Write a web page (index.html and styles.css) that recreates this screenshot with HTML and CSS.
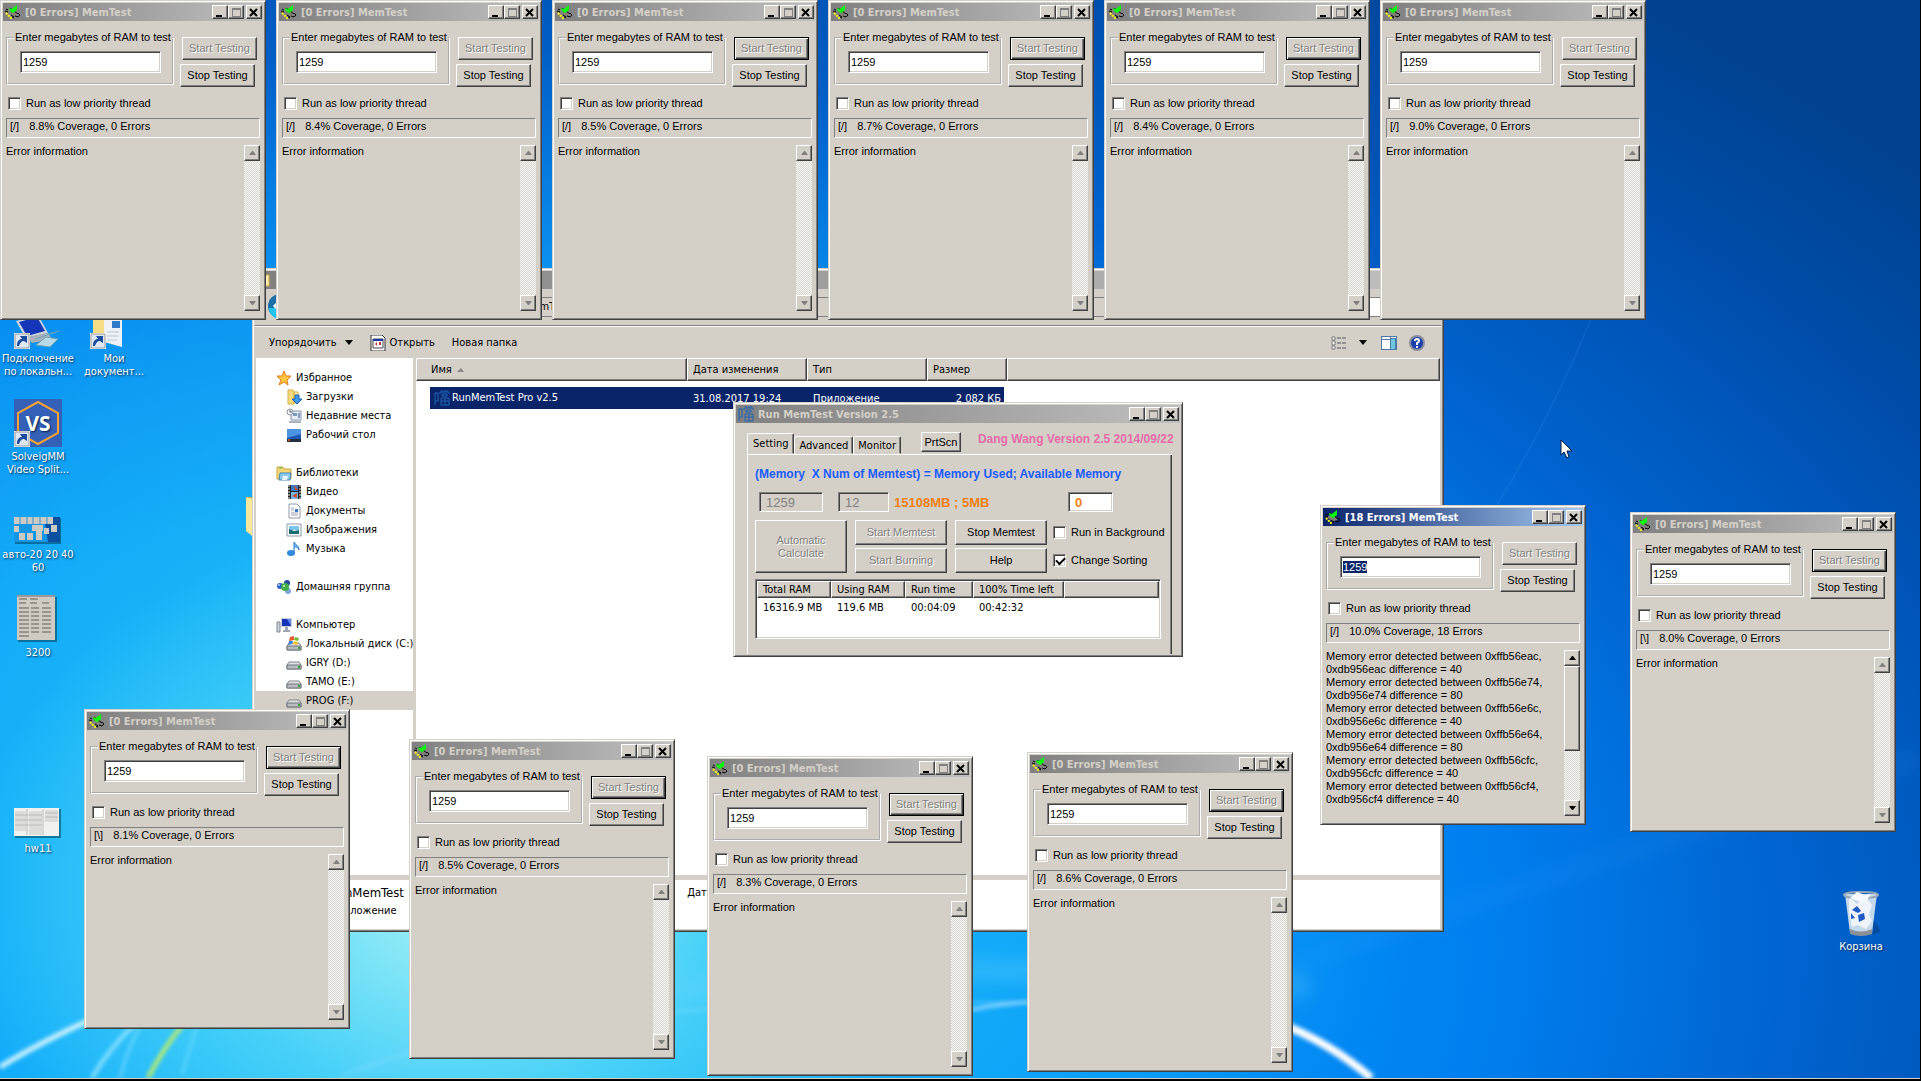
FILE: index.html
```html
<!DOCTYPE html>
<html lang="ru">
<head>
<meta charset="utf-8">
<meta name="viewport" content="width=device-width,initial-scale=1">
<title>MemTest</title>
<link rel="stylesheet" href="styles.css">
</head>
<body>
<svg class="defs" width="0" height="0" aria-hidden="true">
    <defs>
        <symbol id="i-mem" viewBox="0 0 16 16">
            <path d="M2 8l6 5 5-3-6-5z" fill="#808078"/>
            <path d="M1 5l2 1M0 7l3 1M5 4l8 6M13 9l2 2-2 2-3-1M9 14l-2-1M6 11l3 2" stroke="#000" fill="none"/>
            <path d="M1 9l6 6" stroke="#ff0" stroke-width="2" stroke-dasharray="2 1"/>
            <path d="M4 4l3 1 5-4v5L8 9 5 7z" fill="#0f0"/>
        </symbol>
        <symbol id="i-run" viewBox="0 0 16 16">
            <path d="M1 3h3v8H1zM6 2h9M8 0v2M11 0v2M13 0v2M6 2v2M15 2v2M8 4h5v2H8zM7 8h8v7H7zM7 11h8M11 8v7M1 11v4" fill="none" stroke="#1f62b4"/>
        </symbol>
        <symbol id="i-star" viewBox="0 0 16 16"><path d="M8 1l2 5 5 0-4 4 1 5-4-3-5 3 2-5-4-4h5z" fill="#ffc640" stroke="#e87b18"/></symbol>
        <symbol id="i-folder" viewBox="0 0 16 16"><path d="M2 1h5l1 2v12H2z" fill="#f7dc7c" stroke="#d9ae40"/><path d="M8 3h4v11H8z" fill="#ffeeb0" stroke="#d9ae40"/></symbol>
        <symbol id="i-down" viewBox="0 0 16 16"><use href="#i-folder"/><path d="M9 6h4v4h3l-5 5-5-5h3z" fill="#3f9be8" stroke="#1763b5"/></symbol>
        <symbol id="i-recent" viewBox="0 0 16 16"><path d="M5 3h10v9H5z" fill="#e6edf5" stroke="#8a97a6"/><path d="M7 5h4v3H7zM12 5h2v5h-2z" fill="#7b9cc0"/><path d="M3 13h12v2H3z" fill="#a9b2bd"/><circle cx="4" cy="4" r="3" fill="#f3f6f9" stroke="#8a97a6"/><path d="M4 2v2h2" fill="none" stroke="#555"/></symbol>
        <symbol id="i-desk" viewBox="0 0 16 16"><path d="M1 2h14v12H1z" fill="#1e57b6"/><path d="M1 2h14v5L1 11z" fill="#4c94e2"/><path d="M1 12h14v3H1z" fill="#20303f"/><circle cx="3" cy="13" r="1" fill="#f60"/></symbol>
        <symbol id="i-lib" viewBox="0 0 16 16"><path d="M1 2h6l1 2h7v10H1z" fill="#f2d878" stroke="#cda93f"/><path d="M3 3h3" stroke="#4fae4a"/><path d="M4 8h11l-1 7H3z" fill="#8cc9ea" stroke="#3f87b5"/><path d="M6 15l1-4h5l-1 4z" fill="#e9f5fb"/></symbol>
        <symbol id="i-video" viewBox="0 0 16 16"><path d="M2 1h13v14H2z" fill="#222"/><path d="M5 1h7v6H5z" fill="#3d7cc4"/><path d="M5 8h7v7H5z" fill="#76b5ea"/><path d="M8 1l4 5H9zM6 12l5-3v5z" fill="#c4502b"/><path d="M3 1v14M14 1v14" stroke="#eee" stroke-dasharray="2 1"/></symbol>
        <symbol id="i-doc" viewBox="0 0 16 16"><path d="M3 1h8l3 3v11H3z" fill="#fff" stroke="#8c9aa8"/><path d="M5 5h3M5 7h3M5 10h7M5 12h7" stroke="#99a5b1"/><path d="M9 6h3v3H9z" fill="#2f79c7"/></symbol>
        <symbol id="i-pic" viewBox="0 0 16 16"><path d="M1 2h14v12H1z" fill="#fff" stroke="#8c9aa8"/><path d="M3 4h10v4H3z" fill="#7cc4ef"/><path d="M3 7l5 2 5-1v4H3z" fill="#1d6c74"/></symbol>
        <symbol id="i-music" viewBox="0 0 16 16"><ellipse cx="5" cy="12" rx="4" ry="3" fill="#2d8be0"/><path d="M8 12V1c1 3 5 3 5 8-1-3-3-3-4-3" fill="#79bff5" stroke="#2d7dcb"/></symbol>
        <symbol id="i-home" viewBox="0 0 16 16"><circle cx="4" cy="7" r="3" fill="#2f5fd0"/><circle cx="11" cy="4" r="3" fill="#28489c"/><circle cx="12" cy="12" r="3" fill="#7fa5dd"/><circle cx="9" cy="8" r="4" fill="#43b04a"/><circle cx="8" cy="7" r="1" fill="#d8f5cf"/><circle cx="3" cy="6" r="1" fill="#b9cdfa"/></symbol>
        <symbol id="i-pc" viewBox="0 0 16 16"><path d="M1 5h3v10H1z" fill="#cfd5db" stroke="#7d8791"/><path d="M5 1h11v9H5z" fill="#c8d0d8"/><path d="M6 2h9v7H6z" fill="#1734b8"/><path d="M11 2h4v7z" fill="#5f8bee"/><path d="M9 10h3v3h2v2H7v-2h2z" fill="#9ca6b0"/></symbol>
        <symbol id="i-disk" viewBox="0 0 16 16"><path d="M3 7h10l2 3v4H1v-4z" fill="#dfe2e5" stroke="#80868c"/><path d="M1 10h14v4H1z" fill="#b7bcc1" stroke="#6f757b"/><path d="M12 11h2v2h-2z" fill="#2fa62f"/></symbol>
        <symbol id="i-sys" viewBox="0 0 16 16"><use href="#i-disk"/><path d="M4 1l4-1v4L3 5z" fill="#e8592b"/><path d="M9 1l4 1-1 3-4-1z" fill="#6fbb3a"/><path d="M3 5l4 0-1 3-4 1z" fill="#3f86de"/><path d="M8 5l4 1-1 3-4-1z" fill="#f6c22c"/></symbol>
        <symbol id="i-exe" viewBox="0 0 16 16"><path d="M1 0h11l3 3v13H1z" fill="#fff" stroke="#333"/><path d="M3 4h10v9H3z" fill="#fff" stroke="#444"/><path d="M3 4h10v2H3z" fill="#1c3aa5"/><path d="M5 9l2-2v4zM9 7h2v3H9z" fill="#c33"/></symbol>
        <symbol id="i-short" viewBox="0 0 16 16"><path d="M0 0h16v16H0z" fill="#fff"/><path d="M1 1h14v14H1z" fill="#dfe9f5" stroke="#999"/><path d="M3 13c0-5 2-7 5-7L6 3h7v7l-3-2c-3 0-4 2-5 5z" fill="#1c4d9c"/></symbol>
    </defs>
</svg>

<main class="desktop">
    <svg class="wallpaper" viewBox="0 0 1921 1081" preserveAspectRatio="none" aria-hidden="true">
        <defs>
            <filter id="soft"><feGaussianBlur stdDeviation="2"/></filter>
            <filter id="softer"><feGaussianBlur stdDeviation="9"/></filter>
        </defs>
        <path d="M1290 740Q1480 600 1600 300" fill="none" stroke="#3f9bf0" stroke-opacity=".15" stroke-width="2"/>
        <g filter="url(#softer)" fill="none">
            <path d="M350 1080Q700 930 1310 990" stroke="#6fd3ff" stroke-opacity=".35" stroke-width="18"/>
            <path d="M1290 970Q1420 920 1921 760" stroke="#45a8ff" stroke-opacity=".12" stroke-width="16"/>
        </g>
        <g filter="url(#soft)" fill="none">
            <path d="M0 1070Q40 1045 96 1020" stroke="#d8f6ff" stroke-width="5"/>
            <path d="M92 1081Q110 1050 136 1026" stroke="#90e4ff" stroke-width="4"/>
            <path d="M120 1081Q128 1050 142 1026" stroke="#7cdcff" stroke-width="2"/>
            <path d="M148 1081Q164 1050 184 1026" stroke="#c8f060" stroke-width="4"/>
            <path d="M182 1078Q190 1050 198 1026" stroke="#6ddcff" stroke-width="2"/>
            <path d="M340 1080Q520 1000 1030 1005" stroke="#8fe0ff" stroke-opacity=".5" stroke-width="2"/>
            <path d="M960 1015Q1000 1006 1040 1004" stroke="#9ddcff" stroke-width="3"/>
            <path d="M1280 1026Q1330 1045 1372 1081" stroke="#fff" stroke-width="8"/>
        </g>
    </svg>

    <nav class="shortcuts">
        <a href="#" class="shortcut lan">
            <svg width="48" height="48" viewBox="0 0 48 48"><path d="M2 20l22-6 10 18-22 6z" fill="#ccd4dc"/><path d="M5 21l18-5 8 14-18 5z" fill="#1636b8"/><path d="M12 36l22-4 4 6-20 4z" fill="#a8b1ba"/><path d="M22 38l16-6 8-2M22 44l14 2 8-8-12-2z" fill="#b9dbe8" stroke="#6da0b5"/><use href="#i-short" y="32" width="16" height="16"/></svg>
            <span>Подключение по локальн...</span>
        </a>
        <a href="#" class="shortcut docs">
            <svg width="48" height="48" viewBox="0 0 48 48"><path d="M3 8l12-4v40L3 40z" fill="#f7dd85"/><path d="M14 4h18v42l-18-5z" fill="#eef2f6"/><path d="M22 20h8v7h-8z" fill="#2f79c7"/><path d="M17 31h12M17 35h12M17 39h10" stroke="#b8c3cf"/><use href="#i-short" y="32" width="16" height="16"/></svg>
            <span>Мои документ...</span>
        </a>
        <a href="#" class="shortcut">
            <svg width="48" height="48" viewBox="0 0 48 48"><path d="M0 0h48v48H0z" fill="#3560b8"/><path d="M24 3l20 11v20L24 45 4 34V14z" fill="none" stroke="#f7a234" stroke-width="2"/><text class="vs" x="24" y="32" text-anchor="middle">VS</text><use href="#i-short" y="32" width="16" height="16"/></svg>
            <span>SolveigMM Video Split...</span>
        </a>
        <a href="#" class="shortcut">
            <svg width="48" height="48" viewBox="0 0 48 48"><path d="M1 21h46v26H1z" fill="#034" opacity=".5"/><path d="M0 20h46v25H0z" fill="#1496e6"/><path d="M30 20h16v25H34z" fill="#0b4f9f"/><path d="M0 20h39v7H0zM0 29h5v6H0zM18 28h11v6H18zM30 31h5v6h-5zM37 28h6v7h-6zM5 36h6v7H5zM13 36h6v7h-6zM22 34h6v9h-6z" fill="#cbcac5"/><path d="M6 20v7M13 20v7M19 20v7M26 20v7M33 20v7" stroke="#3a8fd0"/></svg>
            <span>авто-20 20 40 60</span>
        </a>
        <a href="#" class="shortcut">
            <svg width="48" height="48" viewBox="0 0 48 48"><path d="M4 2h39v45H4z" fill="#034" opacity=".5"/><path d="M3 0h38v45H3z" fill="#cfcbc2"/><path d="M3 1h38" stroke="#667"/><path d="M5 4h8M16 4h8M5 8h7M16 8h7M28 8h7M5 13h10M5 17h10M5 21h10M5 25h10M5 29h10M5 33h10M5 37h10M5 41h10M17 13h8M17 17h8M17 21h8M17 25h8M17 29h8M17 33h8M17 37h8M28 13h9M28 17h9M28 21h9M28 25h9M28 29h9M28 33h9M28 37h9" stroke="#99958d" stroke-width="2"/></svg>
            <span>3200</span>
        </a>
        <a href="#" class="shortcut last">
            <svg width="48" height="48" viewBox="0 0 48 48"><path d="M1 18h46v29H1z" fill="#034" opacity=".5"/><path d="M0 17h45v28H0z" fill="#f1f1ef"/><path d="M1 20h11v20H1zM15 20h13v24H15zM31 19h13v12H31z" fill="#dcdcd8"/><path d="M1 24h27M1 29h27M1 34h27M31 22h13M31 26h13M13 18v26M29 18v26" stroke="#bbb"/></svg>
            <span>hw11</span>
        </a>
    </nav>

    <svg class="peek-folder" width="12" height="44" viewBox="0 0 12 44" aria-hidden="true"><path d="M0 0l12 2v42L0 34z" fill="#f9e79b"/><path d="M0 0l12 2" stroke="#d6b04e"/></svg>

    <a href="#" class="shortcut bin">
        <svg width="48" height="48" viewBox="0 0 48 48"><path d="M36 30l8 12-8 4z" fill="#013a80" opacity=".5"/><path d="M8 5h32l-5 39q-11 4-22 0z" fill="#c5d9ec"/><path d="M12 8l8 7 7-9 8 10-3 10 3 6-6 8-8-4-6 2-3-14z" fill="#eef4fa"/><path d="M13 40q11 5 22 0v5q-11 4-22 0z" fill="#8b9096"/><ellipse cx="24" cy="6" rx="17" ry="3" fill="none" stroke="#9aa8b5" stroke-width="2"/><path d="M13 9l7-6 8 3 6-1-4 6-9 1z" fill="#f8fbfe"/><path d="M15 21l5-4 4 5-3 2zM14 24l4 5-4 1zM21 26l6-2 1 6-6 3z" fill="#2159c7"/></svg>
        <span>Корзина</span>
    </a>

    <section class="window explorer">
        <header class="titlebar"><svg width="16" height="16"><use href="#i-folder"/></svg></header>
        <div class="addressbar">
            <svg width="54" height="28" viewBox="0 0 54 28"><circle cx="13" cy="13" r="12" fill="#1d6fa8"/><path d="M2 15a11 11 0 0 0 22 0z" fill="#21c5f2"/><path d="M14 7l-6 6 6 6M8 13h11" stroke="#fff" stroke-width="3" fill="none"/><circle cx="40" cy="14" r="11" fill="#a3a5a8"/></svg>
            <div class="path">RunMemTest</div>
            <input class="search" type="text" aria-label="Поиск">
        </div>
        <div class="toolbar">
            <button type="button">Упорядочить <svg width="8" height="5"><path d="M0 0h8L4 5z"/></svg></button>
            <button type="button"><svg width="16" height="16"><use href="#i-exe"/></svg>Открыть</button>
            <button type="button">Новая папка</button>
            <span class="spacer"></span>
            <button type="button" class="view" aria-label="Вид"><svg width="16" height="14" viewBox="0 0 16 14"><path d="M1 1h3v3H1zM1 5h3v4H1zM1 10h3v3H1z" fill="#fff" stroke="#777"/><path d="M6 2h10M6 7h10M6 12h10" stroke="#556" stroke-dasharray="4 1"/></svg><svg width="8" height="5"><path d="M0 0h8L4 5z"/></svg></button>
            <button type="button" class="preview" aria-label="Область просмотра"><svg width="16" height="14" viewBox="0 0 16 14"><path d="M0 0h16v14H0z" fill="#4b78a8"/><path d="M1 1h8v2H1zM1 4h8v9H1zM10 1h5v1h-5z" fill="#fff"/><path d="M10 3h4v10h-4z" fill="#6cc8df"/></svg></button>
            <button type="button" aria-label="Справка"><svg width="16" height="16" viewBox="0 0 16 16"><circle cx="8" cy="8" r="8" fill="#8a8f9c"/><circle cx="8" cy="8" r="6" fill="#1c3fae"/><path d="M6 6q0-2 2-2t2 2q0 1-2 2v2M8 11v2" stroke="#fff" stroke-width="2" fill="none"/></svg></button>
        </div>
        <div class="panes">
            <nav class="tree">
                <a href="#"><svg><use href="#i-star"/></svg>Избранное</a>
                <a href="#" class="sub"><svg><use href="#i-down"/></svg>Загрузки</a>
                <a href="#" class="sub"><svg><use href="#i-recent"/></svg>Недавние места</a>
                <a href="#" class="sub"><svg><use href="#i-desk"/></svg>Рабочий стол</a>
                <a href="#" class="group"><svg><use href="#i-lib"/></svg>Библиотеки</a>
                <a href="#" class="sub"><svg><use href="#i-video"/></svg>Видео</a>
                <a href="#" class="sub"><svg><use href="#i-doc"/></svg>Документы</a>
                <a href="#" class="sub"><svg><use href="#i-pic"/></svg>Изображения</a>
                <a href="#" class="sub"><svg><use href="#i-music"/></svg>Музыка</a>
                <a href="#" class="group"><svg><use href="#i-home"/></svg>Домашняя группа</a>
                <a href="#" class="group"><svg><use href="#i-pc"/></svg>Компьютер</a>
                <a href="#" class="sub"><svg><use href="#i-sys"/></svg>Локальный диск (C:)</a>
                <a href="#" class="sub"><svg><use href="#i-disk"/></svg>IGRY (D:)</a>
                <a href="#" class="sub"><svg><use href="#i-disk"/></svg>TAMO (E:)</a>
                <a href="#" class="sub current"><svg><use href="#i-disk"/></svg>PROG (F:)</a>
            </nav>
            <div class="list">
                <table class="files">
                    <thead>
                        <tr><th class="c-name">Имя <svg width="7" height="4"><path d="M0 4h7L4 0z" fill="#888"/></svg></th><th class="c-mid">Дата изменения</th><th class="c-mid">Тип</th><th class="c-size">Размер</th><th></th></tr>
                    </thead>
                    <tbody>
                        <tr><td><svg width="16" height="16"><use href="#i-run"/></svg>RunMemTest Pro v2.5</td><td>31.08.2017 19:24</td><td>Приложение</td><td>2 082 КБ</td><td></td></tr>
                    </tbody>
                </table>
            </div>
        </div>
        <footer class="details">
            <div><b>RunMemTest</b><span>Приложение</span></div>
            <div>Дата изменения:</div>
        </footer>
    </section>

    <section class="window runner">
        <header class="titlebar">
            <svg width="16" height="16"><use href="#i-run"/></svg><h2>Run MemTest Version 2.5</h2>
            <span class="caption"><button type="button" aria-label="Свернуть"><svg width="10" height="9"><path d="M1 7h6v2H1z"/></svg></button><button type="button" aria-label="Развернуть" disabled><svg width="10" height="9"><path d="M1 0h9v9H1zM2 2v6h7V2z" fill="#808080" fill-rule="evenodd"/></svg></button><button type="button" class="close" aria-label="Закрыть"><svg width="10" height="9"><path d="M1 1l7 7M8 1L1 8" stroke="#000" stroke-width="2"/></svg></button></span>
        </header>
        <div class="tabs">
            <button type="button" class="tab active">Setting</button><button type="button" class="tab">Advanced</button><button type="button" class="tab">Monitor</button>
            <button type="button" class="btn prt">PrtScn</button>
            <span class="version">Dang Wang Version 2.5 2014/09/22</span>
        </div>
        <div class="panel">
            <p class="formula">(Memory&nbsp; X Num of Memtest) = Memory Used; Available Memory</p>
            <div class="values">
                <input type="text" class="field v-mem" value="1259" aria-label="Memory" disabled>
                <input type="text" class="field v-num" value="12" aria-label="Num of Memtest" disabled>
                <output>15108MB ; 5MB</output>
                <input type="text" class="field v-free" value="0" aria-label="Available Memory">
            </div>
            <div class="actions">
                <button type="button" class="btn auto" disabled>Automatic<br>Calculate</button>
                <button type="button" class="btn" disabled>Start Memtest</button>
                <button type="button" class="btn">Stop Memtest</button>
                <label class="check"><input type="checkbox">Run in Background</label>
                <button type="button" class="btn" disabled>Start Burning</button>
                <button type="button" class="btn">Help</button>
                <label class="check"><input type="checkbox" checked>Change Sorting</label>
            </div>
            <div class="stats">
                <table>
                    <thead><tr><th class="s-ram">Total RAM</th><th class="s-ram">Using RAM</th><th class="s-run">Run time</th><th class="s-left">100% Time left</th><th></th></tr></thead>
                    <tbody><tr><td>16316.9 MB</td><td>119.6 MB</td><td>00:04:09</td><td>00:42:32</td><td></td></tr></tbody>
                </table>
            </div>
        </div>
    </section>

    <template id="memtest">
        <section class="window memtest">
            <header class="titlebar">
                <svg width="16" height="16"><use href="#i-mem"/></svg><h2></h2>
                <span class="caption"><button type="button" aria-label="Minimize"><svg width="10" height="9"><path d="M1 7h6v2H1z"/></svg></button><button type="button" aria-label="Maximize" disabled><svg width="10" height="9"><path d="M1 0h9v9H1zM2 2v6h7V2z" fill="#808080" fill-rule="evenodd"/></svg></button><button type="button" class="close" aria-label="Close"><svg width="10" height="9"><path d="M1 1l7 7M8 1L1 8" stroke="#000" stroke-width="2"/></svg></button></span>
            </header>
            <div class="setup">
                <fieldset>
                    <legend>Enter megabytes of RAM to test</legend>
                    <input type="text" class="field amount" value="1259" aria-label="Enter megabytes of RAM to test">
                </fieldset>
                <div class="controls">
                    <button type="button" class="btn start" disabled>Start Testing</button>
                    <button type="button" class="btn">Stop Testing</button>
                </div>
            </div>
            <label class="check"><input type="checkbox">Run as low priority thread</label>
            <div class="status"><span class="spin"></span><span class="coverage"></span></div>
            <div class="log">
                <div class="messages"></div>
                <div class="scrollbar">
                    <button type="button" aria-label="Up"><svg width="7" height="4"><path d="M0 4h7L4 0H3z"/></svg></button>
                    <div class="thumb"></div>
                    <button type="button" class="down" aria-label="Down"><svg width="7" height="4"><path d="M0 0h7L4 4H3z"/></svg></button>
                </div>
            </div>
        </section>
    </template>

    <svg class="cursor" width="13" height="20" viewBox="0 0 13 20" aria-hidden="true"><path d="M1 1v15l3-3 3 6 2-1-2-6h5z" fill="#fff" stroke="#001a40"/></svg>
</main>
<script src="app.js"></script>
</body>
</html>
```
FILE: styles.css
```css
* {
    box-sizing: border-box;
}

html, body {
    height: 100%;
    margin: 0;
    padding: 0;
}

body {
    font-family: "DejaVu Sans Condensed", "Liberation Sans", sans-serif;
    font-size: 11px;
    line-height: 13px;
    color: #000;
    background: #000;
    padding: 0 1px 2px 0;
}

button, input {
    font: inherit;
    color: inherit;
    margin: 0;
}

a {
    color: inherit;
    text-decoration: none;
}

h2, p {
    margin: 0;
}

.defs {
    position: absolute;
}

/* desktop */
.desktop {
    position: relative;
    height: 100%;
    overflow: hidden;
    border-bottom: 1px solid #d4d0c8;
    background:
        radial-gradient(ellipse 26% 36% at 24% 84%, rgba(190, 250, 245, .85), rgba(110, 230, 248, .55) 50%, rgba(60, 205, 250, 0)),
        radial-gradient(ellipse 50% 70% at 24% 74%, rgba(40, 200, 245, .9), rgba(20, 170, 245, 0)),
        radial-gradient(ellipse 104% 112% at 20% 88%, #05a6ff 0, #0596fa 35%, #0080f0 55%, #0064d0 70%, #0050b0 85%, #004290);
}

.wallpaper {
    display: block;
    width: 100%;
    height: 100%;
}

.shortcuts {
    position: absolute;
    top: 301px;
    left: 0;
    display: grid;
    grid-template-columns: 76px 76px;
    grid-auto-rows: 98px;
}

.shortcut {
    display: flex;
    flex-direction: column;
    align-items: center;
    gap: 3px;
    width: 76px;
    grid-column: 1;
    color: #fff;
    text-align: center;
    text-shadow: 1px 1px 2px #024;
}

.shortcut.lan {
    grid-row: 1;
}

.shortcut.docs {
    grid-row: 1;
    grid-column: 2;
}

.shortcut.last {
    grid-row: 6;
}

.shortcut.bin {
    position: absolute;
    right: 21px;
    top: 889px;
}

.vs {
    font: bold 21px "Open Sans", sans-serif;
    fill: #fff;
}

.peek-folder {
    position: absolute;
    left: 246px;
    top: 497px;
}

.cursor {
    position: absolute;
    left: 1560px;
    top: 439px;
}

/* windows */
.window {
    position: absolute;
    display: flex;
    flex-direction: column;
    padding: 2px;
    background: #d4d0c8;
    border: 1px solid;
    border-color: #d4d0c8 #404040 #404040 #d4d0c8;
    box-shadow: inset 1px 1px #fff, inset -1px -1px #808080;
}

.titlebar {
    flex: none;
    display: flex;
    align-items: center;
    gap: 4px;
    height: 18px;
    padding: 0 1px 0 2px;
    color: #d4d0c8;
    background: linear-gradient(to right, #808080, #c0c0c0);
}

.titlebar h2 {
    flex: 1;
    font-size: 11px;
    line-height: 13px;
}

.caption {
    display: flex;
}

.caption button, .scrollbar button {
    display: flex;
    align-items: center;
    justify-content: center;
    width: 16px;
    height: 14px;
    padding: 0;
    background: #d4d0c8;
    border: 1px solid;
    border-color: #fff #404040 #404040 #fff;
    box-shadow: inset -1px -1px #808080;
}

.caption .close {
    margin-left: 2px;
}

.btn {
    height: 23px;
    padding: 0;
    background: #d4d0c8;
    border: 1px solid;
    border-color: #fff #404040 #404040 #fff;
    box-shadow: inset -1px -1px #808080;
    white-space: nowrap;
}

.btn:disabled {
    color: #808080;
    text-shadow: 1px 1px #fff;
}

.field {
    padding: 0 2px;
    background: #fff;
    border: 1px solid;
    border-color: #808080 #fff #fff #808080;
    border-radius: 0;
    box-shadow: inset 1px 1px #404040, inset -1px -1px #d4d0c8;
    outline: none;
}

.field::selection {
    color: #fff;
    background: #0a246a;
}

.check {
    display: flex;
    align-items: center;
    gap: 5px;
    white-space: nowrap;
}

.check input {
    appearance: none;
    flex: none;
    width: 13px;
    height: 13px;
    background: #fff;
    border: 1px solid;
    border-color: #808080 #fff #fff #808080;
    box-shadow: inset 1px 1px #404040, inset -1px -1px #d4d0c8;
}

.check input:checked::before {
    content: "";
    display: block;
    width: 7px;
    height: 4px;
    margin: 2px;
    border-left: 2px solid #000;
    border-bottom: 2px solid #000;
    transform: rotate(-45deg);
}

/* memtest */
.memtest {
    width: 266px;
    height: 320px;
    font-family: "Liberation Sans", Arial, sans-serif;
}

.memtest h2 {
    font-family: "DejaVu Sans Condensed", sans-serif;
}

.memtest.active .titlebar {
    color: #fff;
    background: linear-gradient(to right, #0a246a, #a6caf0);
}

.setup {
    display: flex;
    gap: 6px;
    margin: 10px 3px 0;
}

.setup fieldset {
    flex: none;
    width: 168px;
    min-width: 0;
    height: 54px;
    margin: 0;
    padding: 7px 0 0 12px;
    border: 2px groove #fff;
}

.setup legend {
    margin-left: -6px;
    padding: 0 1px;
    white-space: nowrap;
}

.amount {
    display: block;
    width: 141px;
    height: 22px;
}

.controls {
    display: flex;
    flex-direction: column;
    gap: 4px;
    width: 77px;
    padding-top: 6px;
}

.controls .btn {
    width: 75px;
}

.controls .start {
    align-self: flex-end;
}

.start.default {
    border-color: #000;
    box-shadow: inset 1px 1px #fff, inset -1px -1px #404040, inset -2px -2px #808080;
}

.memtest .check {
    margin: 10px 5px 0;
}

.status {
    display: flex;
    gap: 10px;
    height: 20px;
    margin: 8px 3px 0;
    padding: 1px 3px;
    border: 1px solid;
    border-color: #808080 #fff #fff #808080;
}

.log {
    flex: 1;
    display: flex;
    justify-content: space-between;
    margin: 7px 3px 6px;
}

.messages {
    white-space: pre-line;
}

.scrollbar {
    display: flex;
    flex-direction: column;
    width: 16px;
    background: repeating-conic-gradient(#fff 0 25%, #d4d0c8 0 50%) 0 0 / 2px 2px;
}

.scrollbar button {
    height: 16px;
    fill: #808080;
}

.scrollbar .down {
    margin-top: auto;
}

.active .scrollbar button {
    fill: #000;
}

.active .thumb {
    height: 85px;
    background: #d4d0c8;
    border: 1px solid;
    border-color: #fff #404040 #404040 #fff;
    box-shadow: inset -1px -1px #808080;
}

/* explorer */
.explorer {
    left: 252px;
    top: 268px;
    width: 1192px;
    height: 664px;
}

.addressbar {
    display: flex;
    align-items: center;
    gap: 8px;
    height: 37px;
    padding: 4px 3px 4px 12px;
    border-bottom: 1px solid #808080;
}

.path {
    flex: 1;
    height: 20px;
    padding: 2px 0 2px 176px;
    border: 1px solid #808080;
}

.search {
    width: 200px;
    height: 20px;
    background: #fff;
    border: 1px solid #808080;
}

.toolbar {
    display: flex;
    align-items: center;
    height: 32px;
    padding: 0 16px 0 14px;
    border-top: 1px solid #fff;
}

.toolbar button {
    display: flex;
    align-items: center;
    gap: 4px;
    margin-right: 17px;
    padding: 0;
    border: 0;
    background: none;
}

.toolbar .view {
    gap: 12px;
    margin-right: 14px;
}

.toolbar .preview {
    margin-right: 12px;
}

.toolbar button:last-child {
    margin-right: 0;
}

.toolbar button:first-child {
    gap: 8px;
}

.spacer {
    flex: 1;
}

.panes {
    flex: 1;
    display: flex;
    gap: 3px;
    padding: 0 1px;
}

.tree {
    width: 157px;
    padding-top: 10px;
    background: #fff;
}

.tree a {
    display: flex;
    align-items: center;
    gap: 4px;
    height: 19px;
    padding-left: 20px;
    white-space: nowrap;
}

.tree svg {
    flex: none;
    width: 16px;
    height: 16px;
}

.tree .sub {
    padding-left: 30px;
}

.tree .group {
    margin-top: 19px;
}

.tree .current {
    background: #d4d0c8;
}

.list {
    flex: 1;
    background: #fff;
}

table {
    width: 100%;
    border-collapse: separate;
    border-spacing: 0;
    table-layout: fixed;
}

th {
    padding: 0 5px;
    font-weight: normal;
    text-align: left;
    background: #d4d0c8;
    border: 1px solid;
    border-color: #fff #404040 #404040 #fff;
    box-shadow: inset -1px -1px #808080;
}

.files th {
    height: 23px;
}

.files thead::after {
    content: "";
    display: block;
    height: 6px;
}

.files td {
    height: 22px;
    padding: 0 6px;
    color: #fff;
    background: #0a246a;
}

.files .c-name {
    width: 271px;
    padding-left: 14px;
}

.files .c-mid {
    width: 120px;
}

.files .c-size {
    width: 80px;
}

.files td:first-child {
    padding-left: 18px;
    background: linear-gradient(to right, #fff 14px, #0a246a 14px);
}

.files td:nth-child(4) {
    padding-right: 3px;
    border-right: 3px solid #fff;
    text-align: right;
}

.files td:last-child {
    background: #fff;
}

.files td svg {
    margin-right: 2px;
    vertical-align: middle;
}

.files th svg {
    margin-left: 2px;
    vertical-align: middle;
}

.details {
    display: flex;
    justify-content: space-between;
    height: 54px;
    margin: 0 1px;
    padding: 4px 664px 0 74px;
    background: #fff;
    border-top: 5px solid #d4d0c8;
    line-height: 18px;
}

.details b, .details span {
    display: block;
    font-weight: normal;
}

.details b {
    font-size: 13px;
}

/* run memtest */
.runner {
    left: 733px;
    top: 402px;
    width: 450px;
    height: 255px;
}

.tabs {
    display: flex;
    align-items: flex-end;
    height: 31px;
    padding: 0 5px 0 11px;
}

.tab {
    height: 18px;
    padding: 0 4px;
    background: #d4d0c8;
    border: 1px solid;
    border-color: #fff #404040 transparent #fff;
    border-radius: 2px 2px 0 0;
    box-shadow: inset -1px 0 #808080;
}

.tab.active {
    height: 21px;
    padding: 0 5px;
}

.prt {
    align-self: flex-start;
    width: 40px;
    height: 20px;
    margin: 9px 17px 0 20px;
    font-family: "Liberation Sans", sans-serif;
}

.version {
    align-self: center;
    font: bold 12px/14px "Liberation Sans", sans-serif;
    color: #e76aa9;
    white-space: nowrap;
}

.panel {
    flex: 1;
    margin: 0 8px 0 11px;
    padding: 12px 10px 0 7px;
    border: solid #fff;
    border-width: 1px 0 0 1px;
    box-shadow: inset -1px 0 #404040, inset -2px 0 #808080;
    font-family: "Liberation Sans", sans-serif;
}

.formula {
    font-size: 12px;
    line-height: 14px;
    font-weight: bold;
    color: #1a5cff;
}

.values {
    display: flex;
    align-items: center;
    margin: 11px 49px 8px 4px;
    font-size: 13px;
    font-weight: bold;
    color: #f08010;
}

.values .field {
    height: 20px;
    padding: 0 6px;
}

.values .field:disabled {
    color: #808080;
    background: #d4d0c8;
    font-weight: normal;
}

.values .v-mem {
    width: 64px;
    margin-right: 15px;
}

.values .v-num {
    width: 51px;
    margin-right: 5px;
}

.values .v-free {
    width: 45px;
    margin-left: auto;
}

.actions {
    display: grid;
    grid-template-columns: 92px 92px 92px 1fr;
    grid-auto-rows: 25px;
    gap: 3px 8px;
}

.actions .btn {
    height: auto;
}

.actions .auto {
    grid-row: span 2;
}

.actions .check {
    margin-left: -2px;
    gap: 5px;
}

.stats {
    height: 60px;
    margin: 6px 1px 0 0;
    font-family: "DejaVu Sans Condensed", sans-serif;
    background: #fff;
    border: 1px solid;
    border-color: #808080 #fff #fff #808080;
    box-shadow: inset 1px 1px #404040, inset -1px -1px #d4d0c8;
    padding: 1px;
}

.stats th {
    height: 17px;
    white-space: nowrap;
}

.stats td {
    height: 19px;
    padding: 0 6px;
    white-space: nowrap;
}

.s-ram {
    width: 74px;
}

.s-run {
    width: 68px;
}

.s-left {
    width: 91px;
}
```
FILE: app.js
```js
var windows = [
    { x: 0, y: 0, coverage: "8.8" },
    { x: 276, y: 0, coverage: "8.4" },
    { x: 552, y: 0, coverage: "8.5", isDefault: true },
    { x: 828, y: 0, coverage: "8.7", isDefault: true },
    { x: 1104, y: 0, coverage: "8.4", isDefault: true },
    { x: 1380, y: 0, coverage: "9.0" },
    { x: 84, y: 709, coverage: "8.1", spin: "[\\]", isDefault: true },
    { x: 409, y: 739, coverage: "8.5", isDefault: true },
    { x: 707, y: 756, coverage: "8.3", isDefault: true },
    { x: 1027, y: 752, coverage: "8.6", isDefault: true },
    { x: 1630, y: 512, coverage: "8.0", spin: "[\\]", isDefault: true },
    { x: 1320, y: 505, coverage: "10.0", errors: 18, active: true }
];

var found = [
    ["eac", 40], ["e74", 80], ["e6c", 40], ["e64", 80], ["cfc", 40], ["cf4", 40]
];

var desktop = document.querySelector(".desktop");
var template = document.getElementById("memtest");
var cursor = document.querySelector(".cursor");

windows.forEach(function(w) {
    var node = template.content.cloneNode(true);
    var win = node.querySelector(".window");
    var errors = w.errors || 0;

    win.style.left = w.x + "px";
    win.style.top = w.y + "px";
    win.querySelector("h2").textContent = "[" + errors + " Errors] MemTest";
    win.querySelector(".spin").textContent = w.spin || "[/]";
    win.querySelector(".coverage").textContent = w.coverage + "% Coverage, " + errors + " Errors";
    win.querySelector(".start").classList.toggle("default", !!w.isDefault);
    win.querySelector(".messages").textContent = errors ? found.map(function(f) {
        return "Memory error detected between 0xffb56" + f[0] + ",\n0xdb956" + f[0] + " difference = " + f[1];
    }).join("\n") : "Error information";

    desktop.insertBefore(node, cursor);
    if (w.active) {
        win.classList.add("active");
        win.querySelector(".amount").select();
    }
});
```
